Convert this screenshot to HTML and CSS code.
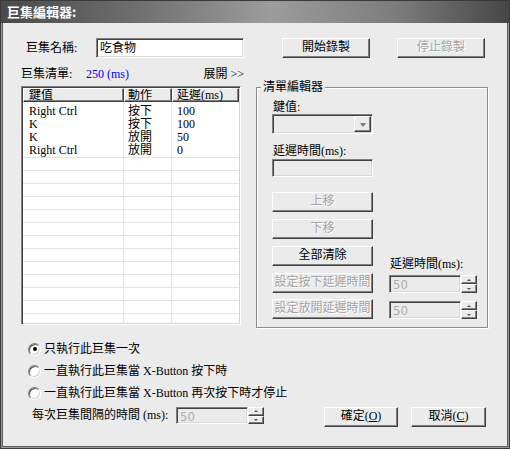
FILE: index.html
```html
<!DOCTYPE html>
<html lang="zh-Hant">
<head>
<meta charset="utf-8">
<title>巨集編輯器</title>
<link rel="stylesheet" href="styles.css">
</head>
<body>
<div class="window">
  <div class="titlebar">巨集編輯器:</div>
  <div class="content">
    <div class="row1">
      <span class="name-lbl">巨集名稱:</span>
      <div class="field name-field">吃食物</div>
      <div class="btn rec-start">開始錄製</div>
      <div class="btn rec-stop disabled">停止錄製</div>
    </div>

    <div class="main">
      <div class="leftcol">
        <div class="listhead">
          <span class="lh-title">巨集清單:</span>
          <span class="blue">250 (ms)</span>
          <span class="expand">展開 &gt;&gt;</span>
        </div>
        <div class="list">
          <div class="hdr">
            <div class="h1">鍵值</div>
            <div class="h2">動作</div>
            <div class="h3">延遲(ms)</div>
          </div>
          <div class="lbody">
            <div class="data">
              <div class="r"><div class="c1">Right Ctrl</div><div class="c2">按下</div><div class="c3">100</div></div>
              <div class="r"><div class="c1">K</div><div class="c2">按下</div><div class="c3">100</div></div>
              <div class="r"><div class="c1">K</div><div class="c2">放開</div><div class="c3">50</div></div>
              <div class="r"><div class="c1">Right Ctrl</div><div class="c2">放開</div><div class="c3">0</div></div>
            </div>
            <div class="e"></div><div class="e"></div><div class="e"></div><div class="e"></div>
            <div class="e"></div><div class="e"></div><div class="e"></div><div class="e"></div>
            <div class="e"></div><div class="e"></div><div class="e"></div><div class="e"></div>
            <div class="e"></div>
          </div>
        </div>
      </div>

      <div class="group">
        <div class="legend">清單編輯器</div>
        <div class="gbody">
          <div class="gleft">
            <div class="glabel first">鍵值:</div>
            <div class="combo"><div class="dd"><span class="dd-arrow"></span></div></div>
            <div class="glabel second">延遲時間(ms):</div>
            <div class="field gtext"></div>
            <div class="btn gbtn up disabled">上移</div>
            <div class="btn gbtn disabled">下移</div>
            <div class="btn gbtn">全部清除</div>
            <div class="btn gbtn disabled">設定按下延遲時間</div>
            <div class="btn gbtn last disabled">設定放開延遲時間</div>
          </div>
          <div class="gright">
            <div class="glabel">延遲時間(ms):</div>
            <div class="spin s1">
              <div class="field spin-in">50</div>
              <div class="spin-btns"><div class="sb"><span class="ar-up"></span></div><div class="sb"><span class="ar-dn"></span></div></div>
            </div>
            <div class="spin s2">
              <div class="field spin-in">50</div>
              <div class="spin-btns"><div class="sb"><span class="ar-up"></span></div><div class="sb"><span class="ar-dn"></span></div></div>
            </div>
          </div>
        </div>
      </div>
    </div>

    <div class="radio r-first"><span class="rb on"></span><span class="rt">只執行此巨集一次</span></div>
    <div class="radio"><span class="rb"></span><span class="rt">一直執行此巨集當 X-Button 按下時</span></div>
    <div class="radio"><span class="rb"></span><span class="rt">一直執行此巨集當 X-Button 再次按下時才停止</span></div>

    <div class="bottom">
      <span class="int-lbl">每次巨集間隔的時間 (ms):</span>
      <div class="spin s3">
        <div class="field spin-in">50</div>
        <div class="spin-btns"><div class="sb"><span class="ar-up"></span></div><div class="sb"><span class="ar-dn"></span></div></div>
      </div>
      <div class="btn ok">確定(<u>O</u>)</div>
      <div class="btn cancel">取消(<u>C</u>)</div>
    </div>
  </div>
</div>
</body>
</html>
```

FILE: styles.css
```css
html, body {
  margin: 0;
  padding: 0;
  background: #ebebeb;
}

.window {
  width: 510px;
  height: 449px;
  box-sizing: border-box;
  border: 1px solid #3a3a3a;
  background: #ebebeb;
  box-shadow: inset 1px 0 #9a9a9a, inset -1px 0 #9a9a9a, inset 0 -1px #9a9a9a,
              inset 2px 0 #5c5c5c, inset -2px 0 #5c5c5c, inset 0 -2px #5c5c5c;
  font-family: "Liberation Serif", "Noto Sans CJK TC", serif;
  font-size: 12px;
  line-height: 13px;
  color: #000;
  overflow: hidden;
}

.titlebar {
  height: 22px;
  line-height: 22px;
  padding-left: 6px;
  color: #fff;
  font-family: "Noto Sans CJK TC", sans-serif;
  font-weight: bold;
  font-size: 13px;
  background: linear-gradient(to right, #4a4a4a 0%, #6c6c6c 25%, #9c9c9c 53%, #7c7c7c 78%, #464646 100%);
}

/* generic controls */
.btn {
  box-sizing: border-box;
  height: 20px;
  border: 1px solid;
  border-color: #fff #404040 #404040 #fff;
  box-shadow: inset -1px -1px #808080;
  display: flex;
  align-items: center;
  justify-content: center;
  white-space: nowrap;
  line-height: 13px;
  padding-bottom: 1px;
}
.btn.disabled {
  color: #a3a3a3;
  text-shadow: 1px 1px 0 #fff;
}

.field {
  box-sizing: border-box;
  border: 1px solid;
  border-color: #808080 #fff #fff #808080;
  box-shadow: inset 1px 1px #404040, inset -1px -1px #d8d8d8;
  background: #ebebeb;
}

/* row 1 */
.row1 {
  display: flex;
  align-items: center;
  margin-top: 15px;
  height: 20px;
}
.name-lbl {
  margin-left: 25px;
  width: 70px;
}
.name-field {
  width: 148px;
  height: 20px;
  background: #fff;
  padding: 3px 0 0 3px;
  line-height: 13px;
}
.rec-start { margin-left: 38px; width: 88px; }
.rec-stop { margin-left: 27px; width: 88px; }

/* main */
.main {
  display: flex;
  align-items: flex-start;
  margin-top: 8px;
}
.leftcol {
  margin-left: 20px;
  width: 223px;
}
.listhead {
  display: flex;
  align-items: center;
  height: 16px;
  line-height: 16px;
}
.lh-title { width: 65px; }
.blue { color: #0000ff; }
.expand { margin-left: auto; }

.list {
  margin-top: 4px;
  width: 220px;
  height: 239px;
  box-sizing: border-box;
  padding: 1px;
  border: 1px solid;
  border-color: #808080 #fff #fff #808080;
  box-shadow: inset 1px 1px #404040, inset -1px -1px #d4d4d4;
  background: #fff;
  overflow: hidden;
}
.hdr {
  display: grid;
  grid-template-columns: 101px 48px 67px;
  height: 14px;
}
.hdr > div {
  box-sizing: border-box;
  border: 1px solid;
  border-color: #fff #404040 #404040 #fff;
  box-shadow: inset -1px -1px #808080;
  background: #ebebeb;
  line-height: 12px;
  white-space: nowrap;
  overflow: hidden;
}
.hdr .h1 { padding-left: 5px; }
.hdr .h2 { padding-left: 3px; }
.hdr .h3 { padding-left: 4px; }

.lbody {
  height: 221px;
  background-color: #fff;
  background-image:
    linear-gradient(to right, transparent 100px, #e3e3e3 100px, #e3e3e3 101px, transparent 101px),
    linear-gradient(to right, transparent 148px, #e3e3e3 148px, #e3e3e3 149px, transparent 149px);
  overflow: hidden;
}
.data {
  box-sizing: border-box;
  height: 56px;
  padding-top: 3px;
  border-bottom: 1px solid #e3e3e3;
}
.r {
  display: grid;
  grid-template-columns: 101px 48px 67px;
  height: 13px;
  line-height: 13px;
  white-space: nowrap;
}
.r .c1 { padding-left: 6px; }
.r .c2 { padding-left: 4px; }
.r .c3 { padding-left: 5px; }
.e {
  box-sizing: border-box;
  height: 13px;
  border-bottom: 1px solid #e3e3e3;
}

/* group box */
.group {
  margin-left: 12px;
  margin-top: 21px;
  width: 232px;
  height: 241px;
  box-sizing: border-box;
  border: 1px solid #8c8c8c;
  box-shadow: inset 1px 1px #fff, 1px 1px #fff;
}
.legend {
  width: fit-content;
  margin: -7px 0 -6px 4px;
  padding: 0 2px;
  background: #ebebeb;
  line-height: 13px;
}
.gbody {
  display: flex;
  align-items: flex-end;
  margin-left: 15px;
  margin-top: 13px;
}
.gleft {
  width: 101px;
  display: flex;
  flex-direction: column;
}
.glabel {
  height: 13px;
  line-height: 13px;
  padding-left: 1px;
  white-space: nowrap;
}
.glabel.second { margin-top: 11px; }
.combo {
  box-sizing: border-box;
  height: 20px;
  border: 1px solid;
  border-color: #808080 #fff #fff #808080;
  box-shadow: inset 1px 1px #404040, inset -1px -1px #d8d8d8;
  padding: 1px;
  display: flex;
  justify-content: flex-end;
}
.dd {
  box-sizing: border-box;
  width: 17px;
  height: 16px;
  border: 1px solid;
  border-color: #fff #404040 #404040 #fff;
  box-shadow: inset -1px -1px #808080;
  display: flex;
  align-items: center;
  justify-content: center;
}
.dd-arrow {
  width: 0;
  height: 0;
  border-left: 3.5px solid transparent;
  border-right: 3.5px solid transparent;
  border-top: 4px solid #777;
  margin-top: 1px;
}
.gtext {
  margin-top: 1px;
  height: 18px;
}
.gbtn { margin-top: 7px; }
.gbtn.up { margin-top: 15px; }
.gbtn.last { margin-top: 6px; }

.gright {
  margin-left: 16px;
  display: flex;
  flex-direction: column;
}
.spin {
  display: flex;
  height: 18px;
}
.spin.s1 { margin-top: 4px; }
.spin.s2 { margin-top: 8px; }
.spin-in {
  width: 72px;
  height: 100%;
  color: #ababab;
  font-family: "Liberation Sans Narrow", "DejaVu Sans Condensed", "Liberation Sans", sans-serif;
  font-size: 13px;
  line-height: 15px;
  padding: 1px 0 0 3px;
}
.spin-btns {
  width: 16px;
  display: flex;
  flex-direction: column;
}
.sb {
  flex: 1;
  box-sizing: border-box;
  border: 1px solid;
  border-color: #fff #404040 #404040 #fff;
  box-shadow: inset -1px -1px #808080;
  display: flex;
  align-items: center;
  justify-content: center;
}
.ar-up {
  width: 0;
  height: 0;
  border-left: 2px solid transparent;
  border-right: 2px solid transparent;
  border-bottom: 2px solid #555;
}
.ar-dn {
  width: 0;
  height: 0;
  border-left: 2px solid transparent;
  border-right: 2px solid transparent;
  border-top: 2px solid #555;
}

/* radios */
.radio {
  display: flex;
  align-items: center;
  height: 16px;
  margin-left: 27px;
  margin-top: 6px;
  white-space: nowrap;
}
.radio.r-first { margin-top: 13px; }
.rb {
  position: relative;
  width: 13px;
  height: 13px;
  box-sizing: border-box;
  border-radius: 50%;
  border: 1px solid;
  border-color: #808080 #fff #fff #808080;
  box-shadow: inset 1px 1px #5a5a5a, inset -1px -1px #d0d0d0;
  background: #fff;
  flex: none;
}
.rb.on::after {
  content: "";
  position: absolute;
  left: 3.5px;
  top: 3.5px;
  width: 4px;
  height: 4px;
  border-radius: 50%;
  background: #000;
}
.rt { margin-left: 3px; }

/* bottom row */
.bottom {
  display: flex;
  align-items: flex-start;
  margin-top: 6px;
  height: 20px;
}
.int-lbl {
  margin-left: 31px;
  width: 144px;
  line-height: 16px;
  white-space: nowrap;
}
.spin.s3 { height: 17px; }
.ok { margin-left: 60px; width: 74px; }
.cancel { margin-left: 13px; width: 75px; }
```
